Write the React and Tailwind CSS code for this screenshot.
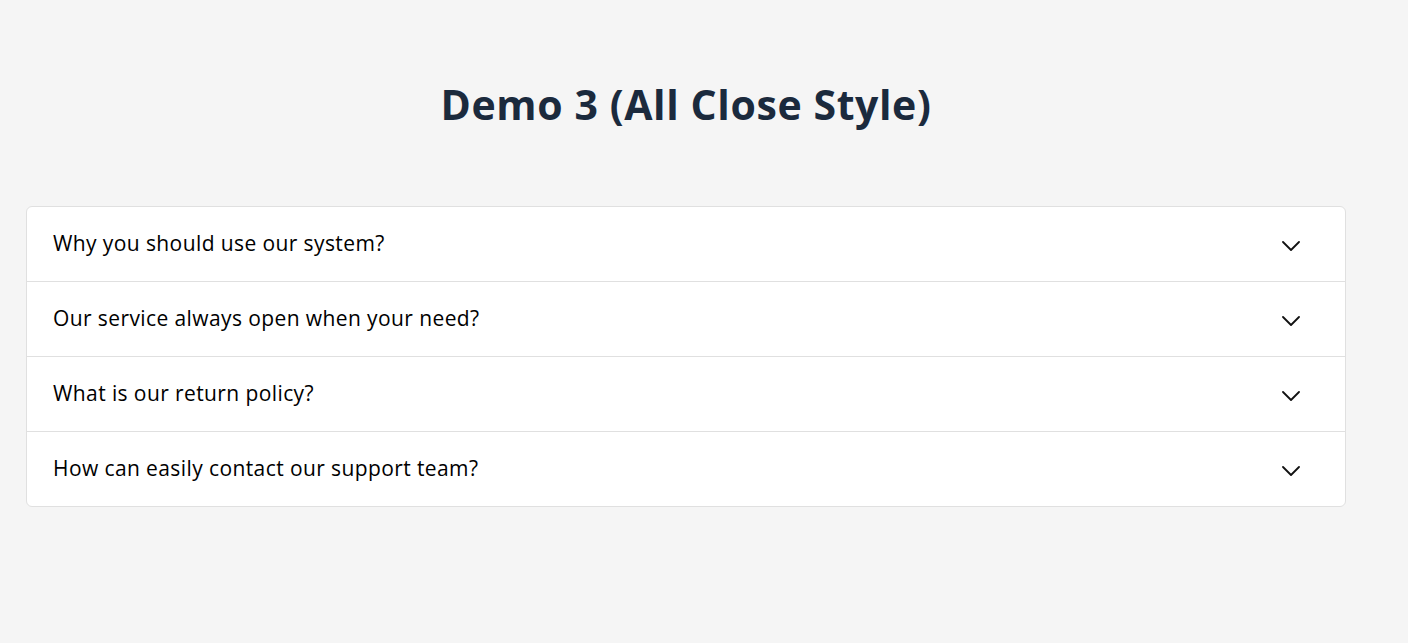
import React from "react";

const items = [
  "Why you should use our system?",
  "Our service always open when your need?",
  "What is our return policy?",
  "How can easily contact our support team?",
];

function Chevron() {
  return (
    <svg width="18" height="10" viewBox="0 0 18 10" fill="none" className="block">
      <polyline points="1,1 9,9 17,1" stroke="#111" strokeWidth="1.8" strokeLinecap="round" strokeLinejoin="round" />
    </svg>
  );
}

export default function App() {
  return (
    <div className="min-h-[643px] w-full bg-[#f5f5f5]" style={{ fontFamily: '"Open Sans", "Noto Sans", sans-serif' }}>
      <div className="ml-[26px] w-[1320px] pt-[76px]">
        <h1 className="text-center text-[41px] font-bold leading-[56px] text-[#1b2a3d] tracking-[0.6px]">
          Demo 3 (All Close Style)
        </h1>
        <div className="mt-[74px] rounded-[6px] border border-[#e0e0e0] bg-white">
          {items.map((t, i) =>
            i === 0 ? (
              <div key={i} className="flex h-[74px] items-center justify-between pl-[26px] pr-[45px]">
                <span className="text-[21px] text-black tracking-[0.4px]">{t}</span>
                <span className="pt-[4px]"><Chevron /></span>
              </div>
            ) : (
              <div key={i} className="flex h-[75px] items-center justify-between border-t border-[#e0e0e0] pl-[26px] pr-[45px]">
                <span className="text-[21px] text-black tracking-[0.4px]">{t}</span>
                <span className="pt-[4px]"><Chevron /></span>
              </div>
            )
          )}
        </div>
      </div>
    </div>
  );
}
